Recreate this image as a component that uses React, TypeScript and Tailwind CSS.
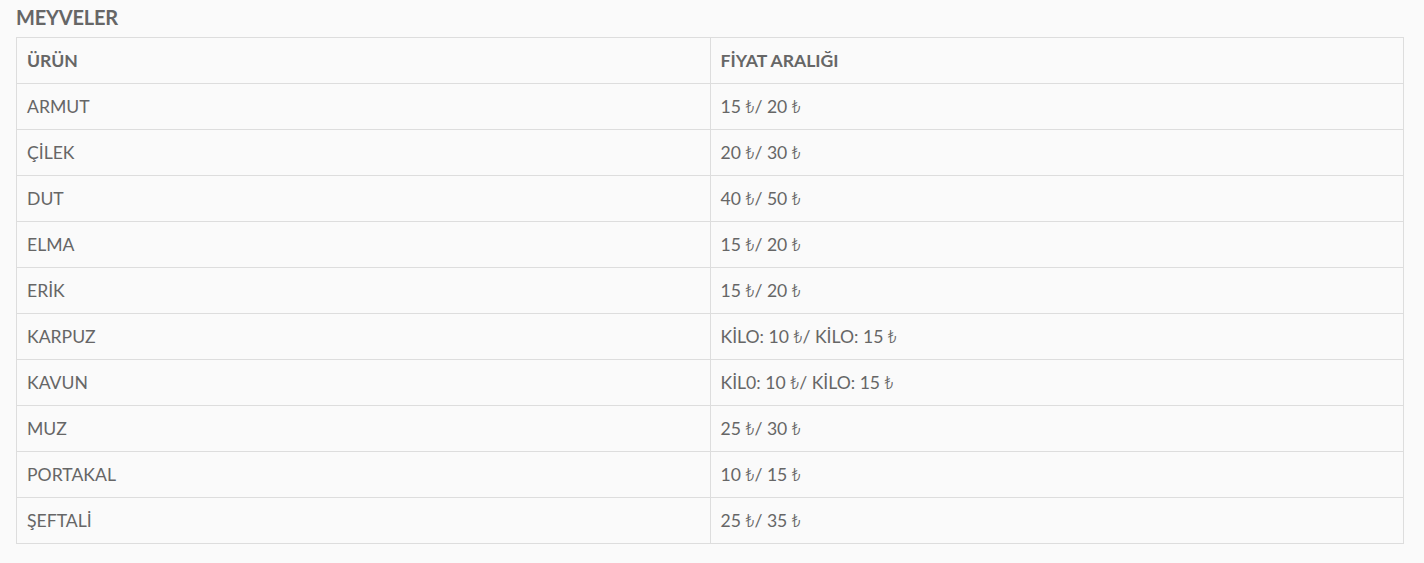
import React from "react";

const rows: [string, string][] = [
  ["ARMUT", "15 ₺/ 20 ₺"],
  ["ÇİLEK", "20 ₺/ 30 ₺"],
  ["DUT", "40 ₺/ 50 ₺"],
  ["ELMA", "15 ₺/ 20 ₺"],
  ["ERİK", "15 ₺/ 20 ₺"],
  ["KARPUZ", "KİLO: 10 ₺/ KİLO: 15 ₺"],
  ["KAVUN", "KİL0: 10 ₺/ KİLO: 15 ₺"],
  ["MUZ", "25 ₺/ 30 ₺"],
  ["PORTAKAL", "10 ₺/ 15 ₺"],
  ["ŞEFTALİ", "25 ₺/ 35 ₺"],
];

function Price({ text }: { text: string }) {
  const parts = text.split("₺");
  return (
    <>
      {parts.map((p, i) => (
        <React.Fragment key={i}>
          {p}
          {i < parts.length - 1 && (
            <span className="leading-none font-light [font-family:Roboto,sans-serif]">₺</span>
          )}
        </React.Fragment>
      ))}
    </>
  );
}

export default function App() {
  return (
    <div className="min-h-[563px] bg-[#fafafa] px-4 pt-[4px] text-[#666] [font-family:Lato,'Noto_Sans',sans-serif]">
      <h2 className="text-[20px] font-bold leading-[26px] tracking-[-0.2px]">MEYVELER</h2>
      <table className="mt-[7px] w-[1388px] table-fixed border-collapse border border-[#ddd] text-[17.6px]">
        <thead>
          <tr>
            <th className="w-1/2 border border-[#ddd] px-[10px] py-[10px] text-left font-bold leading-[25px]">ÜRÜN</th>
            <th className="w-1/2 border border-[#ddd] px-[10px] py-[10px] text-left font-bold leading-[25px]">FİYAT ARALIĞI</th>
          </tr>
        </thead>
        <tbody>
          {rows.map(([a, b]) => (
            <tr key={a}>
              <td className="border border-[#ddd] px-[10px] py-[10px] leading-[25px]">{a}</td>
              <td className="border border-[#ddd] px-[10px] py-[10px] leading-[25px]">
                <Price text={b} />
              </td>
            </tr>
          ))}
        </tbody>
      </table>
    </div>
  );
}
